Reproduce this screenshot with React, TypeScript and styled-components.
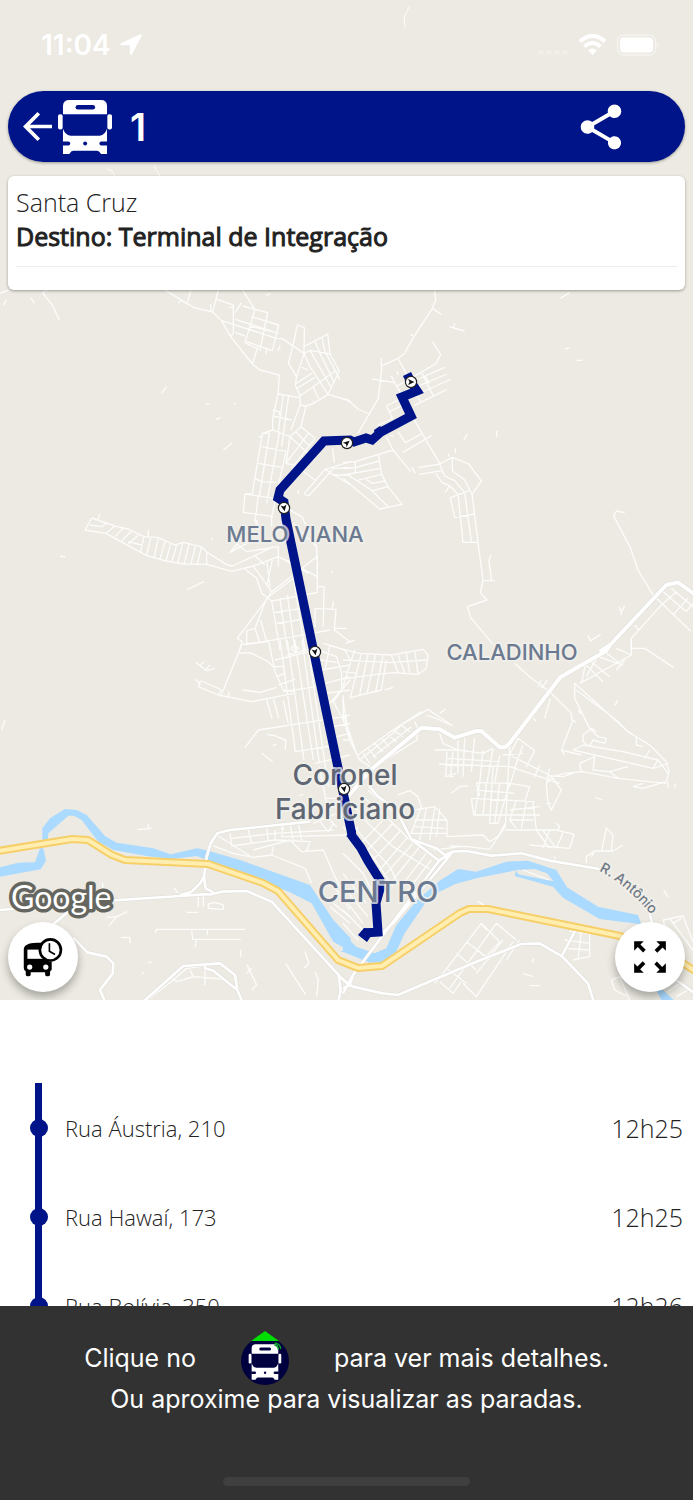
import React from "react";
import styled, { createGlobalStyle } from "styled-components";
import { MdShare } from "react-icons/md";

const NAVY = "#001489";
const LAND = "#eceae2";

const GlobalStyle = createGlobalStyle`
  *, *::before, *::after { box-sizing: border-box; }
  body { margin: 0; background: #fff; font-family: "Open Sans", "Noto Sans", sans-serif; color: #222; }
  button { font: inherit; border: 0; padding: 0; cursor: pointer; color: inherit; background: none; }
  svg { display: block; flex: none; }
`;

const Screen = styled.div`
  display: flex;
  flex-direction: column;
  height: 100vh;
  min-height: 900px;
  overflow: hidden;
`;

const MapArea = styled.section`
  position: relative;
  flex: none;
  height: calc(100vh / 3 * 2);
  min-height: 500px;
  display: flex;
  flex-direction: column;
  padding: 0 8px 8px;
  background: ${LAND};
  overflow: hidden;
`;

const MapCanvas = styled.svg`
  position: absolute;
  inset: 0;
  width: 100%;
  height: 100%;
`;

const StatusBar = styled.div`
  position: relative;
  display: flex;
  justify-content: space-between;
  align-items: center;
  height: 91px;
  padding: 0 25px 2px 33px;
  color: #fff;
  font: 600 28px/32px Inter, sans-serif;
`;

const StatusGroup = styled.div`
  display: flex;
  align-items: center;
  gap: 9px;
`;

const Header = styled.header`
  position: relative;
  display: flex;
  align-items: center;
  height: 71px;
  padding: 0 57px 0 15px;
  border-radius: 36px;
  background: ${NAVY};
  color: #fff;
  box-shadow: 0 1px 3px rgba(0, 0, 0, 0.35);
`;

const HeaderButton = styled.button<{ $push?: boolean }>`
  display: flex;
  margin-left: ${(p) => (p.$push ? "auto" : "0")};
  margin-right: ${(p) => (p.$push ? "0" : "6px")};
`;

const LineNumber = styled.h1`
  margin: 0 0 0 18px;
  font: 600 38px/48px Inter, sans-serif;
`;

const InfoCard = styled.section`
  position: relative;
  margin-top: 14px;
  height: 114px;
  padding: 9px 8px 0;
  border-radius: 6px;
  background: #fff;
  box-shadow: 0 1px 3px rgba(0, 0, 0, 0.35);
`;

const InfoText = styled.p<{ $strong?: boolean }>`
  margin: 0;
  font-size: 25px;
  line-height: 34px;
  font-weight: ${(p) => (p.$strong ? 400 : 350)};
  -webkit-text-stroke: ${(p) => (p.$strong ? "1px currentColor" : "0")};
`;

const Divider = styled.hr`
  margin: 13px 0 0;
  border: 0;
  border-top: 1px solid #ececec;
`;

const MapControls = styled.div`
  position: relative;
  display: flex;
  justify-content: space-between;
  margin-top: auto;
`;

const RoundButton = styled.button`
  width: 70px;
  height: 70px;
  border-radius: 50%;
  background: #fff;
  color: #000;
  box-shadow: 0 5px 8px rgba(0, 0, 0, 0.3);
`;

const StopSection = styled.section`
  flex: 1;
  min-height: 0;
  padding-top: 83px;
  overflow: hidden;
`;

const StopList = styled.ol`
  list-style: none;
  margin: 0;
  padding: 0;
`;

const StopRow = styled.li`
  display: flex;
  align-items: center;
  height: 89px;
  padding: 0 10px 0 35px;
`;

const Rail = styled.span`
  align-self: stretch;
  display: flex;
  align-items: center;
  justify-content: center;
  width: 7px;
  margin-right: 23px;
  background: ${NAVY};
`;

const Dot = styled.span`
  flex: none;
  width: 18px;
  height: 18px;
  border-radius: 50%;
  background: ${NAVY};
`;

const StopName = styled.span`
  flex: 1;
  font-size: 22px;
  font-weight: 300;
`;

const StopTime = styled.time`
  font-size: 25px;
  font-weight: 300;
`;

const Hint = styled.footer`
  display: flex;
  flex-direction: column;
  align-items: center;
  padding: 25px 16px 14px;
  background: #323232;
  color: #fff;
  font: 400 25px/28px Inter, sans-serif;
`;

const HintLine = styled.p`
  display: flex;
  align-items: center;
  justify-content: center;
  gap: 45px;
  margin: 0;
`;

const HomeIndicator = styled.div`
  width: 247px;
  max-width: 50%;
  height: 9px;
  margin-top: 64px;
  border-radius: 5px;
  background: #3f3f3f;
`;

function BusShape({ hole }: { hole: string }) {
  return (
    <>
      <g fill="#fff">
        <path d="M15 43V17Q16 0 34 0H130Q147 0 148 17V43Z" />
        <rect x="0" y="43" width="14" height="46" rx="6" />
        <rect x="149" y="43" width="14" height="46" rx="6" />
        <path d="M15 86Q20 105 38 108H126Q143 105 148 86V163H130Q124 153 118 153H46Q40 153 34 163H15Z" />
      </g>
      <g fill={hole}>
        <rect x="53" y="15" width="59" height="14" rx="7" />
        <path d="M13 125H31a6 6 0 0 1 0 12H13Z" />
        <path d="M150 125H131a6 6 0 0 0 0 12H150Z" />
        <circle cx="82" cy="131" r="6" />
      </g>
    </>
  );
}

const MINOR_NW = `M495 0L560 40L583 53L638 66L665 92L692 140L757 222L780 240L838 255L834 312L818 385V420L787 430
M572 0L563 38M545 28L535 40M655 0L638 66M650 28L700 45V130L692 140M632 42V66M685 52H700M724 38L706 68
M727 0L765 58L803 68L780 180L735 158L765 58M728 48L765 58M706 88L836 130M755 80L836 105L817 182L740 155M665 92L830 145L847 146L912 190
M706 128L735 138M748 108L830 128M775 165L757 222M797 192L800 178M833 184L841 167M800 16L810 10
M912 190L913 113L892 105L878 170L865 220L890 260M912 190L890 260L886 285L900 318M918 348L940 340L984 313L1018 243L990 192L983 132L912 170
M912 190L930 181L990 192M930 181L995 295M945 155L960 190L1003 278M965 140L975 185L1020 268M912 190L930 230L984 313M886 282L935 250M888 297L945 262M900 318L1010 240M905 232L925 240M938 288L955 325M938 332L945 340
M984 313L1042 330L1052 337M834 312L900 323V345L918 348M900 318V345L873 420M918 348L903 410L870 440M850 315L835 425M866 316L845 470M818 378L875 390M818 360L838 365V375
M818 420L870 440L945 510M903 410L945 445M887 425L928 468M870 440L858 520M925 430L858 520L880 525M945 445L875 535
M787 430L757 610M808 430L778 620M838 430L800 640M858 484L815 680M775 440H787V430H808V440M785 470L858 484M775 520L845 532M765 565L785 575L830 578M757 610L735 612L730 667L820 680M735 612L820 625M775 615L768 672L765 690L775 720
M885 525L945 570M912 612L975 538L1052 515M912 612L926 618L1000 535L1052 533M975 538L1052 585M998 555H1052M998 475L1003 518M893 600L897 613
M275 684L255 720L318 730L440 797L498 813L553 822L620 823L695 844L760 828L835 800L880 820M275 684L350 710L385 717L432 740L473 742L525 765L550 757L603 770L623 788L680 824L697 828L765 797L820 770
M318 730L345 708M345 740L368 715M365 752L395 722M385 762L415 735M385 755L425 765M422 785L432 740M440 797L452 742M462 803L475 745M480 808L495 755M498 813L512 762M515 817L530 765M533 820L548 760M553 822L567 762M572 823L587 766M592 823L604 772M620 823V788M293 692L300 670M268 705L305 710L320 698M445 720V740
M485 310L500 290M617 343L629 341M647 388L661 384M702 343L707 338M670 481L697 458M561 899L612 875M180 798L196 801M10 46L20 28M93 23L103 40M127 8L157 45L178 90M0 10L25 0M127 8L145 0M636 745V751
M735 837L770 865L785 910L815 933M760 828L815 905M765 797L795 825M690 787L720 750M710 762L740 785L835 770L835 830M715 760L690 787L750 755M800 810L810 890M818 805L800 890M835 800L925 850
M815 905L795 935L712 1045L727 1055L720 1080M815 905L950 800M800 925L880 865M815 933L950 908M815 933L840 1080M840 925L862 1080M862 915L885 1080M880 860L915 1080M820 968L905 955M830 1000L905 988M735 1064L850 1045L990 1020
M740 1022V1060M740 1022L765 1015L800 925M765 1015L778 1055M782 990L800 1055M952 795V910M952 890H972L970 1010M945 955V1010M945 955L1008 958L1003 1020L1050 1055M1003 1015H1040M905 835L952 860M860 655L905 680L950 770V810M880 700L950 770M997 850V842M1000 935L997 955M770 690L775 720M815 680V710`;

const MINOR_NE = `M275 0L278 30L268 55L213 140L183 192L165 205L117 227L106 325L45 430M268 55L295 73M203 133L213 140M115 203V227M165 205L195 260M88 267L155 278L180 320M145 258L155 278M162 245L165 255
M268 155L293 193L280 220L160 290M0 327L15 330L45 357L78 372M235 245L272 320M220 270L305 232M222 290L312 252M225 312L325 267M213 347L312 298M248 260L258 280M220 315L233 335
M130 348L165 330M130 348L148 385M140 365L185 342M105 405L150 385M205 375L290 520M165 425L187 458L235 432M180 487L265 437M130 440L150 480L203 545M0 517L37 515L150 480M0 535L37 533L107 513M0 555L115 535M37 515V550
M107 495L115 550L135 590L177 643L110 657L0 565M15 555L85 600L135 650M40 572L115 553M70 568L88 580L125 573M85 603L135 590M318 110L365 123M332 112L335 98M207 532L217 550M140 435L152 440
M225 533L290 522L328 502L377 522L415 573L387 613L365 570L328 543V502M290 522L305 558L335 572L365 607M228 553L298 542M278 550L297 578L320 587L345 613M320 587L307 607M322 623L380 602M322 623L335 683L395 672M345 613L360 757H405L387 613M365 607L385 755
M405 757L420 870L412 908L432 930L373 950L383 983L450 1063M443 795L438 813L446 872M420 872H455M362 450L373 433M461 423V440M337 475V490M315 490L318 500M666 177L680 173M701 211H718M652 25L680 8
M812 678L820 663L845 668M812 678L862 773L885 840L930 915M835 975V965L828 950M835 965L845 948M735 1035L742 1053L773 1033M930 915L1043 1023M960 905L1030 965M985 895L1050 950M1003 900M955 945L865 1045V1080M1000 905L950 950M1035 925L990 975M1050 940L1030 965M875 1005L887 1020`;

const MINOR_SW = `M725 13L715 40L665 163M655 165L755 185L880 160M725 13L805 5M715 40L750 38L805 65L825 85M805 0L825 95L850 150L885 155M840 0L886 335M862 0L912 360M884 0L940 360M906 0L958 370M924 20L985 440M850 180L865 250M800 180L816 235M820 175L836 235
M820 80H850L855 100L830 110M835 135L885 118M825 60L930 35M850 155L950 140M735 322L775 270L1000 235M886 335L1010 315M945 370L1050 345M585 118L600 130L595 140L655 165L665 150L605 123L595 130M587 67L620 92L645 85M600 75L613 65M618 88L630 75M683 175L688 155M728 150L780 157L830 142M785 340L818 365M800 283L830 288M830 290L858 300L855 330M818 317L830 312
M955 30L1010 50L1025 100V150L1000 185L1030 240L1050 300M970 10L1035 30L1050 60M960 60L1015 68M965 90L1050 75M975 130L1050 110M975 160L1050 150M985 195L1050 120M1000 235L1050 225M1000 260L1050 250M1010 290L1050 280M1030 165V240M990 15L975 90M5 270L15 238M884 15L895 25L884 35L873 25ZM862 45L920 30
M412 569L455 565M445 553V565M845 570V555M897 468L910 462M958 380L990 540L1010 560M975 475H1010M975 500H1020M940 550L1010 520
M640 618L700 640L760 652L815 645L915 685L935 730M650 585L750 648M690 580L695 618L825 600L930 605L920 632M745 570L755 610M800 565L805 605M825 570V600M850 560L845 590L1050 585M870 555L880 600M895 550L905 600M760 630L870 600L905 635L970 630L1000 700L1040 780M695 595L825 580L1000 570M820 620L815 645M960 545L985 575L1000 550
M465 880L470 868H735M575 872L578 898H722M590 900L585 922M622 870V885M363 892L390 893V910M320 832L350 830L382 815M350 830L328 856M595 770V800M610 768V800M560 817H595M625 792L645 787L670 795V808L625 805ZM522 743L535 760M857 970L917 1064M740 973L770 1035L755 1050M755 985L740 1000M915 935L927 970L912 985M945 995L955 1020L950 1070M722 930V950M443 967H455M425 1005L431 996
M445 1078L520 1020L560 985L610 978M515 1012L530 1025L580 1010L680 1018M570 990L580 1010M615 985V1035M308 730V745M990 800L1050 850M1000 790L1050 830M1010 750L1050 810`;

const MINOR_SE = `M0 28L50 40L145 45L240 28L255 45L250 85L225 103L150 98L45 110L0 118M0 60L140 68L250 60M35 30L0 140M55 40L22 173L115 150L130 60M75 42L50 165M98 42L72 160M120 45L98 155M125 150L150 142M145 45L165 98M165 45L185 98M190 40L200 98M215 30L225 103M8 10L35 0M0 95L45 100
M0 180L20 300L50 360L90 385M0 220L40 340M0 300H25M50 360L150 280L175 255L255 208L330 258M45 345L150 270L235 215M330 258L290 240L250 225M60 340L80 370M75 325L100 355M95 310L120 335M115 295L140 320M130 280L160 305M150 270L180 290M175 255L200 275M215 245L225 265M90 350L205 260M110 370L222 300V275M290 220L307 208
M290 280L300 310L345 330L420 340L450 325M275 330H345M288 372L500 380M312 335L308 410L340 400M330 335L322 410L332 410M345 300L345 400M365 295L360 410M395 293L385 395M420 330L410 430M450 325L432 430M470 345L455 430M500 320L487 560L440 628L375 620L320 618M525 295L575 332L550 380M525 295L500 345L625 408M500 380L650 430M480 345L540 340M540 315L520 370L500 440M310 355L470 365M450 380L440 550H465L500 430M620 385L610 430M590 375L575 410
M400 428L500 430L560 440L545 485M400 428L410 468M385 475L520 482L575 485M385 475L392 525L590 525M410 430L395 525M430 430L420 525M470 430L455 550M400 450L515 460M520 480L500 540L520 565M550 485L535 565M570 485L580 570M500 540L570 540M487 570H640L693 583L680 625L560 615M500 510L590 500M580 570L620 625M600 572L640 625M620 570L600 625M660 578L640 625M325 460L350 440L375 438
M515 70L560 110L620 155L685 220L688 245L655 330L715 345M585 140L595 120M595 145L613 120M570 235L578 242M605 235L622 175M690 240L700 248M695 130V175L740 265L765 290L790 295L785 310L750 300L740 320L720 305V285L745 265L760 275
M695 130L855 275L920 315L970 365L978 395L970 425L900 445L870 440M700 150L820 240L855 275M705 210L715 222M655 330L665 345M690 330L930 385L975 370M690 330L720 315L840 335L945 360L930 385M710 370L715 395L665 400L610 415M710 370L755 350L750 390L800 395L825 415L970 430M665 400L720 395L825 415M800 395L855 380M880 290V315L900 320M920 330L905 355M945 360L975 400M975 425V443M998 430L995 443M870 440L900 430M815 197L825 180
M625 408L660 410L690 400M610 430L615 490L625 510L655 450L630 415ZM610 490H625M757 472L778 480M715 130L730 60M710 130L865 45M730 75L780 125M745 65L800 110M765 50L840 75M785 35L830 70M865 0V45L820 25M865 25H905L993 83M845 60L820 90M760 55L730 110
M165 465L200 452L225 470L235 500M215 510L275 500L312 540V590L420 585L440 605L465 590L487 550M235 500L205 580M250 505L230 600M275 505L260 600M215 540L312 540M215 560L305 565M200 580L310 580M290 505L280 590M220 600L275 630L350 620
M35 500L75 550L150 620L265 690M10 530L50 580L140 680L170 740M60 470L130 530L200 600M75 450L180 540M0 560L90 650L150 740M130 530L45 620M150 550L65 640M175 570L85 665M195 590L110 690M210 610L130 700M230 620L150 720M250 640L170 745M265 660L180 770M45 560L20 600M0 640L60 700L90 760M0 700L70 790M0 740L75 830M0 770L60 850M0 810L60 870M0 850L45 900
M405 785L425 797M275 1030L300 1000L415 850L470 905L430 950M460 850L520 900M460 850L320 1045M415 850L430 870M370 905L430 950M340 940L400 990M310 985L370 1030M290 1025L330 1060L355 1025M510 905L400 1070L360 1030M530 900L490 960M390 920L440 960M480 900L400 1000
M730 670V650L755 633H810L840 615M775 635L790 565L810 585L805 635M755 633L745 650M640 550L650 560L645 570M680 873L740 880V950L690 960M665 900L740 910M665 925L740 930M715 875L705 955M560 1037H590M567 968L573 955M635 650V662M540 1000L570 1010M962 750L975 772M960 840L1020 828L1050 905M960 840L970 870L1010 920M980 835L1050 930M990 850L1015 835M805 1020L830 1010L860 1080M805 1020L815 1050L850 1068M975 1055L1010 1030M1000 1070L1035 1050`;

const MAJOR = {
  ne: "M770 1085L801 1065L970 885L1005 877L1055 913",
  sw: "M0 810L330 782L540 768L610 763H635L665 755L740 753L815 785L1020 1010L1055 1040M540 766L575 755L600 730L612 710L620 650L632 610L652 580L690 570L930 545M612 710L617 745L640 757M205 815L150 860M220 893L262 937L320 950L340 970L338 1000L300 1050L315 1085M430 1085L550 978L660 970L705 1005L712 1050L727 1085M615 978V985L640 992L712 1050M1015 1000L1022 1050L1015 1085",
  seWide: "M801 15L790 32L652 112L500 310L485 322H470L415 273H400L335 293L290 268L235 263L80 392L40 440L15 470",
  se: "M75 435L105 470L160 510L180 550L205 598L280 625L305 645L330 635L370 633L445 647L535 640L620 662L770 687M325 640L290 660L30 1005L0 1060M205 598L285 660M325 640L300 672L150 850L110 885M915 800L928 855M700 865L658 945M0 1020L30 1040L120 1060L165 1065L400 965L535 912L590 910L658 950L735 1030L752 1085M1000 1020L1055 1060M30 1005L20 1035L0 1045",
};

const RIVER_SW =
  "M0 682L55 668L105 667L120 625L130 625L138 662L122 688L0 710ZM127 607V565L150 535L195 507L230 510L260 525L315 588L350 608L460 625L512 643L592 625L625 632L720 660L930 735L1000 840L1052 895V938L1020 935L1040 928L1000 905L935 790L870 757L640 668L590 648L515 657L440 648L340 630L295 605L245 540L222 527H205L145 580L143 605Z";
const RIVER_SE =
  "M0 880L40 920L95 940L130 925L160 855L225 778L290 722L345 687L400 695L490 665L555 662L640 690L672 742L765 800L885 825L895 853L770 837L660 773L630 740L515 708L520 690L490 697L400 715L335 733L260 770L185 880L155 945L130 965L80 968L0 935ZM940 1050H960L992 1080H955Z";

const markers = [
  { x: 411, y: 382, turn: 90 },
  { x: 347, y: 443, turn: 50 },
  { x: 284, y: 508, turn: 170 },
  { x: 315, y: 652, turn: 170 },
  { x: 344, y: 789, turn: 170 },
];

const tiles = {
  nw: "translate(0 290) scale(.33333)",
  ne: "translate(343 290) scale(.33333)",
  sw: "translate(0 640) scale(.33333)",
  se: "translate(343 640) scale(.33333)",
};

function RouteMap() {
  return (
    <MapCanvas viewBox="0 0 693 1000" preserveAspectRatio="xMidYMid slice" role="img" aria-label="Mapa do itinerário">
      <rect width="693" height="1000" fill={LAND} />
      <g fill="none" stroke="#fff" strokeWidth="4" strokeOpacity=".85" strokeLinejoin="round">
        <path strokeWidth="1" d="M409 7L404 18L405 28M107 169L112 171L115 177M154 166L160 176" />
        <path transform={tiles.nw} d={MINOR_NW} />
        <path transform={tiles.ne} d={MINOR_NE} />
        <path transform={tiles.sw} d={MINOR_SW} />
        <path transform={tiles.se} d={MINOR_SE} />
      </g>
      <g fill="#aadaff">
        <path transform={tiles.sw} d={RIVER_SW} />
        <g transform={tiles.se}>
          <path d={RIVER_SE} />
          <path d="M520 690L575 687L612 700L632 724L525 703Z" fill={LAND} />
          <path d="M540 690L618 720" stroke="#fff" strokeWidth="3" />
        </g>
      </g>
      {[
        { color: "#dddcd8", extra: 3 },
        { color: "#ffffff", extra: 0 },
      ].map(({ color, extra }) => (
        <g key={color} fill="none" stroke={color} strokeWidth={8 + extra} strokeLinejoin="round">
          <path transform={tiles.ne} d={MAJOR.ne} strokeWidth={12 + extra} />
          <path transform={tiles.sw} d={MAJOR.sw} />
          <path transform={tiles.se} d={MAJOR.seWide} strokeWidth={12 + extra} />
          <path transform={tiles.se} d={MAJOR.se} />
        </g>
      ))}
      {[
        { color: "#f7cf68", width: 8 },
        { color: "#ffeeb0", width: 4 },
      ].map(({ color, width }) => (
        <path
          key={color}
          fill="none"
          stroke={color}
          strokeWidth={width}
          strokeLinejoin="round"
          d="M-2 851L72 839L88 840L112 855L125 860L208 864L263 883L278 891L338 960L358 968L382 966L460 913L469 909L488 909L576 927L620 936L660 948L695 971"
        />
      ))}
      <path
        fill="none"
        stroke={NAVY}
        strokeWidth="9"
        strokeLinejoin="miter"
        d="M407 374L411 382L417 391L402 397L411 416L381 432L372 440L366 438L354 442L350 440L324 441L280 490L278 498L284 502L286 519L351 830L352 836L361 848L368 861L380 880L380 889L376 903L378 932L364 933"
      />
      <path fill={NAVY} d="M358 935L364 928L371 929L371 936L367 942ZM346 836L356 830L356 842ZM374 430L380 426L386 432L376 440Z" />

      <g
        fontFamily="Inter, sans-serif"
        fontWeight="500"
        fill="#6b7a90"
        stroke="#f1f0ec"
        strokeOpacity=".75"
        strokeWidth="4"
        strokeLinejoin="round"
        paintOrder="stroke"
        textAnchor="middle"
      >
        <text x="295" y="542" fontSize="22">MELO VIANA</text>
        <text x="512" y="660" fontSize="22">CALADINHO</text>
        <text x="378" y="902" fontSize="29">CENTRO</text>
        <g fill="#5e6673" fontSize="28">
          <text x="345" y="785">Coronel</text>
          <text x="345" y="819">Fabriciano</text>
        </g>
        <path id="street-antonio" d="M599 871Q626 884 654 918" fill="none" stroke="none" />
        <text fontSize="14" fill="#6f7984" textAnchor="start">
          <textPath href="#street-antonio">R. Antônio</textPath>
        </text>
      </g>

      {markers.map((m) => (
        <g key={m.y} transform={`translate(${m.x} ${m.y})`}>
          <circle r="5.6" fill="#fff" stroke="#222" strokeWidth="1.2" />
          <path d="M0 -3.4L3 3L0 1.4L-3 3Z" fill="#111" transform={`rotate(${m.turn})`} />
        </g>
      ))}

      <text
        x="11"
        y="909"
        fontFamily="Lato, sans-serif"
        fontSize="32"
        fontWeight="400"
        fill="#fff"
        stroke="#666661"
        strokeWidth="7"
        strokeLinejoin="round"
        paintOrder="stroke"
      >
        Google
      </text>
    </MapCanvas>
  );
}

function LocationArrow() {
  return (
    <svg width="22" height="21" viewBox="0 0 22 21" fill="#fff" aria-hidden="true">
      <path d="M20.4.3L.9 9.3C-.3 9.9 0 11.300 1.200 11.300H9.800V19.800C9.800 21.200 11.400 21.400 12 20.200L21.700 1.800C22.200.700 21.400-.100 20.400.300Z" />
    </svg>
  );
}

function StatusIcons() {
  return (
    <svg width="122" height="22" viewBox="0 0 122 22" aria-hidden="true">
      <g fill="#fff" fillOpacity=".25">
        <rect x="0" y="16" width="6" height="5" rx="2" />
        <rect x="8" y="16" width="6" height="5" rx="2" />
        <rect x="16" y="16" width="6" height="5" rx="2" />
        <rect x="24" y="16" width="6" height="5" rx="2" />
      </g>
      <g fill="none" stroke="#fff" strokeWidth="4">
        <path d="M42 7.500Q54.500-3.500 67 7.500" />
        <path d="M46.500 12.500Q54.500 5.500 62.500 12.500" />
      </g>
      <path d="M54.500 21L50 16.300Q54.500 12.700 59 16.300Z" fill="#fff" />
      <rect x="79.500" y="1" width="38" height="20" rx="6" fill="none" stroke="#fff" strokeOpacity=".45" strokeWidth="1.500" />
      <rect x="82" y="3.500" width="33" height="15" rx="4" fill="#fff" />
      <path d="M119.500 8Q122 11 119.500 14Z" fill="#fff" fillOpacity=".5" />
    </svg>
  );
}

function BusClockIcon() {
  return (
    <svg width="70" height="70" viewBox="0 0 213 213" aria-hidden="true">
      <path d="M48 84Q48 64 88 63H125V120H133V143Q133 148 128 150V160Q128 165 123 165H118Q113 165 113 160V153H69V160Q69 165 64 165H59Q54 165 54 160V150Q48 147 48 140Z" />
      <path d="M59 84H110V112H59Z" fill="#fff" />
      <circle cx="66" cy="137" r="8" fill="#fff" />
      <circle cx="115" cy="137" r="8" fill="#fff" />
      <circle cx="129" cy="85" r="32" fill="#fff" stroke="#000" strokeWidth="8" />
      <path d="M126 65V89L143 99" fill="none" stroke="#000" strokeWidth="5" />
    </svg>
  );
}

function ExpandIcon() {
  return (
    <svg width="70" height="70" viewBox="-106 -106 212 212" aria-hidden="true">
      {[0, 90, 180, 270].map((angle) => (
        <path key={angle} transform={`rotate(${angle})`} d="M-48 -48H-19L-29 -38L-13 -22L-21 -14L-37 -30L-48 -19Z" />
      ))}
    </svg>
  );
}

function LiveBusIcon() {
  return (
    <svg width="48" height="54" viewBox="0 0 144 162" role="img" aria-label="ônibus">
      <circle cx="72" cy="90" r="72" fill="#00003f" />
      <path d="M72 0L114 30H30Z" fill="#0d0" />
      <g transform="translate(23 40) scale(.6 .65)">
        <BusShape hole="#00003f" />
      </g>
      <path d="M100 42Q112 44 112 56M101 36Q118 38 119 54" fill="none" stroke="#0a2" strokeWidth="4" />
    </svg>
  );
}

const stops = [
  { name: "Rua Áustria, 210", time: "12h25" },
  { name: "Rua Hawaí, 173", time: "12h25" },
  { name: "Rua Bolívia, 350", time: "12h26" },
];

export default function App() {
  return (
    <Screen>
      <GlobalStyle />
      <MapArea>
        <RouteMap />
        <StatusBar>
          <StatusGroup>
            <span>11:04</span>
            <LocationArrow />
          </StatusGroup>
          <StatusIcons />
        </StatusBar>
        <Header>
          <HeaderButton type="button" aria-label="Voltar">
            <svg width="29" height="29" viewBox="4 4 16 16" fill="#fff" aria-hidden="true">
              <path d="M20 11H7.830l5.590-5.590L12 4l-8 8 8 8 1.410-1.410L7.830 13H20v-2z" />
            </svg>
          </HeaderButton>
          <svg width="54" height="54" viewBox="0 0 163 163" aria-hidden="true">
            <BusShape hole={NAVY} />
          </svg>
          <LineNumber>1</LineNumber>
          <HeaderButton type="button" aria-label="Compartilhar" $push>
            <MdShare size={54} />
          </HeaderButton>
        </Header>
        <InfoCard>
          <InfoText>Santa Cruz</InfoText>
          <InfoText $strong>Destino: Terminal de Integração</InfoText>
          <Divider />
        </InfoCard>
        <MapControls>
          <RoundButton type="button" aria-label="Horários">
            <BusClockIcon />
          </RoundButton>
          <RoundButton type="button" aria-label="Expandir mapa">
            <ExpandIcon />
          </RoundButton>
        </MapControls>
      </MapArea>
      <StopSection>
        <StopList>
          {stops.map((stop) => (
            <StopRow key={stop.name}>
              <Rail>
                <Dot />
              </Rail>
              <StopName>{stop.name}</StopName>
              <StopTime>{stop.time}</StopTime>
            </StopRow>
          ))}
        </StopList>
      </StopSection>
      <Hint>
        <HintLine>
          <span>Clique no</span>
          <LiveBusIcon />
          <span>para ver mais detalhes.</span>
        </HintLine>
        <HintLine>Ou aproxime para visualizar as paradas.</HintLine>
        <HomeIndicator />
      </Hint>
    </Screen>
  );
}
